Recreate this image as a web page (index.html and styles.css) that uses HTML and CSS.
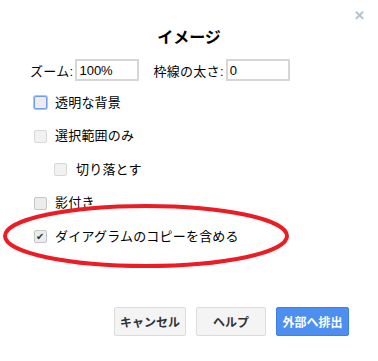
FILE: index.html
```html
<!DOCTYPE html>
<html lang="ja">
<head>
    <meta charset="UTF-8">
    <title>イメージ</title>
    <link rel="stylesheet" href="styles.css">
</head>
<body>
    <div class="dialog">
        <span class="close">&#10005;</span>
        <h2 class="title">イメージ</h2>

        <div class="zoom-row">
            <label>ズーム:</label>
            <input type="text" class="field" value="100%">
            <label class="gap-left">枠線の太さ:</label>
            <input type="text" class="field" value="0">
        </div>

        <div class="options">
            <div class="option"><span class="box focus"></span>透明な背景</div>
            <div class="option"><span class="box disabled"></span>選択範囲のみ</div>
            <div class="option indent"><span class="box disabled"></span>切り落とす</div>
            <div class="option"><span class="box"></span>影付き</div>
            <div class="option"><span class="box checked">&#10004;</span>ダイアグラムのコピーを含める</div>
        </div>

        <div class="buttons">
            <button class="btn">キャンセル</button>
            <button class="btn help">ヘルプ</button>
            <button class="btn primary">外部へ排出</button>
        </div>

        <!-- red marker around the last option -->
        <svg class="marker" width="378" height="361" viewBox="0 0 378 361">
            <ellipse cx="146" cy="236" rx="141" ry="30" fill="none" stroke="#ed1c24" stroke-width="4"/>
        </svg>
    </div>
</body>
</html>
```

FILE: styles.css
```css
body {
    margin: 0;
    background: #fff;
    font-family: "Liberation Sans", "Noto Sans CJK JP", sans-serif;
    font-size: 13px;
    color: #000;
}
.dialog {
    position: relative;
    width: 378px;
    height: 361px;
    padding-top: 28px;
    box-sizing: border-box;
}
.close {
    position: absolute;
    top: 8px;
    right: 13px;
    color: #b4c0cc;
    font-size: 13px;
    font-weight: bold;
}
.title {
    margin: 0;
    text-align: center;
    font-size: 16px;
    line-height: 20px;
    font-weight: bold;
}
.zoom-row {
    display: flex;
    align-items: center;
    margin-top: 11px;
    padding-left: 30px;
    height: 22px;
    letter-spacing: 0.3px;
}
.zoom-row label {
    margin-right: 2px;
}
.gap-left {
    margin-left: 14px;
}
.field {
    width: 64px;
    height: 22px;
    box-sizing: border-box;
    border: 2px solid #d6d6d6;
    padding: 0 2px;
    font: 13px "Liberation Sans", sans-serif;
    color: #000;
    outline: none;
}
.options {
    margin-top: 5px;
}
.option {
    display: flex;
    align-items: center;
    height: 33.5px;
    padding-left: 34px;
    line-height: 16px;
    letter-spacing: 0.2px;
}
.option.indent {
    padding-left: 54px;
}
.box {
    width: 11px;
    height: 11px;
    border: 1px solid #c6c6c6;
    border-radius: 2px;
    background: #ececec;
    margin-right: 8px;
    flex: none;
    display: flex;
    align-items: center;
    justify-content: center;
    font-size: 10px;
    color: #333;
}
.option.indent .box {
    margin-right: 9px;
}
.box.focus {
    border-color: #6d9eeb;
    box-shadow: 0 0 0 1px #a9c4f5;
}
.box.disabled {
    background: #f1f1f1;
    border-color: #d8d8d8;
}
.buttons {
    display: flex;
    justify-content: flex-end;
    gap: 10px;
    margin-top: 53px;
    padding-right: 29px;
}
.btn {
    height: 29px;
    width: 72px;
    border: 1px solid #dcdcdc;
    border-radius: 2px;
    background: #f4f4f4;
    color: #333;
    font: bold 12px "Liberation Sans", "Noto Sans CJK JP", sans-serif;
    padding: 0;
}
.btn.help {
    width: 70px;
}
.btn.primary {
    width: 73px;
    background: #4d8ff0;
    border-color: #3f7fe0;
    color: #fff;
}
.marker {
    position: absolute;
    left: 0;
    top: 0;
    pointer-events: none;
}
```
